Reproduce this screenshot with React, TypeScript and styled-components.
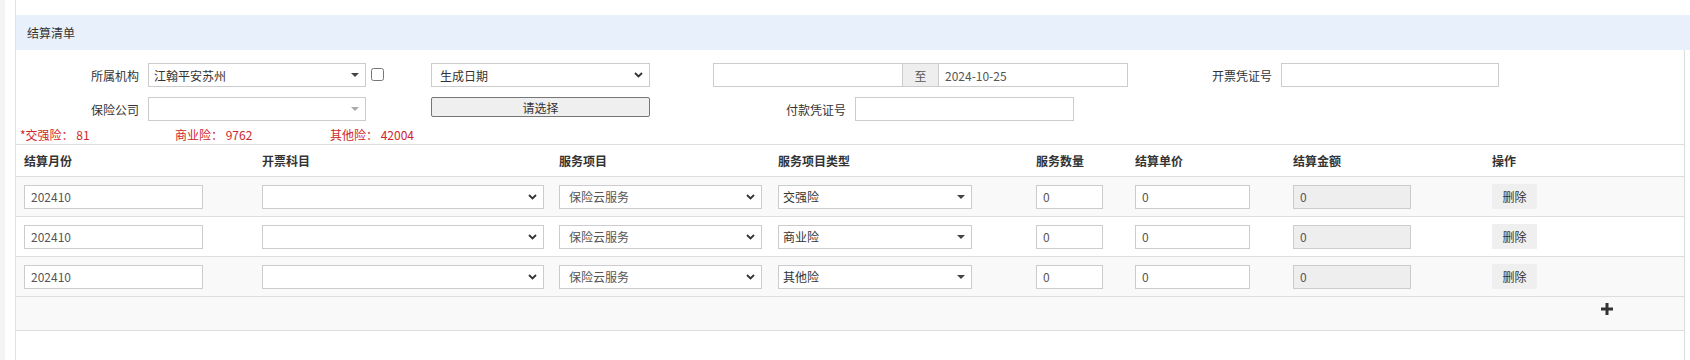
import React from 'react'
import styled, { createGlobalStyle } from 'styled-components'

const GlobalStyle = createGlobalStyle`
    body {
        margin: 0;
        background: #fff;
        font-family: "Noto Sans CJK SC", "Noto Sans", sans-serif;
        font-size: 12px;
        color: #333;
    }
    * { box-sizing: border-box; }
`

const Page = styled.div`
    display: flex;
    min-height: 360px;
`
const EdgeStrip = styled.div`
    width: 5px;
    margin-right: 10px;
    background: #f4f4f4;
`
const Panel = styled.div`
    flex: 1;
    display: flex;
    flex-direction: column;
    padding-top: 15px;
    border-left: 1px solid #e2e2e2;
`
const TitleBar = styled.div`
    height: 35px;
    display: flex;
    align-items: center;
    padding-left: 11px;
    background: #e8f1fb;
    color: #333;
`
const Body = styled.div`
    flex: 1;
    margin-right: 5px;
    padding-top: 13px;
    border-right: 1px solid #ddd;
`
const FormRow = styled.div<{ $top?: number }>`
    display: flex;
    align-items: center;
    height: 24px;
    margin-top: ${p => p.$top || 0}px;
`
const Label = styled.label<{ $w: number; $ml?: number }>`
    width: ${p => p.$w}px;
    margin-left: ${p => p.$ml || 0}px;
    margin-right: 9px;
    text-align: right;
    color: #333;
    white-space: nowrap;
`
const Field = styled.div<{ $w: number; $ml?: number; $pl?: number; $muted?: boolean }>`
    width: ${p => p.$w}px;
    height: 24px;
    margin-left: ${p => p.$ml || 0}px;
    padding: 0 6px 0 ${p => p.$pl ?? 5}px;
    display: flex;
    align-items: center;
    justify-content: space-between;
    border: 1px solid #ccc;
    background: #fff;
    color: ${p => (p.$muted ? '#555' : '#333')};
    white-space: nowrap;
`
const TextInput = styled.input<{ $w: number; $ml?: number; $disabled?: boolean }>`
    width: ${p => p.$w}px;
    height: 24px;
    margin: 0 0 0 ${p => p.$ml || 0}px;
    padding: 0 6px;
    border: 1px solid #ccc;
    border-radius: 0;
    outline: none;
    background: ${p => (p.$disabled ? '#eee' : '#fff')};
    font-family: "Noto Sans CJK SC", "Noto Sans", sans-serif;
    font-size: 12px;
    color: #555;
`
const CheckBox = styled.input`
    width: 13px;
    height: 13px;
    margin: 5px 0 0 5px;
    align-self: flex-start;
`
const DateRange = styled.div`
    display: flex;
    margin-left: 63px;
`
const Addon = styled.span`
    width: 35px;
    height: 24px;
    display: flex;
    align-items: center;
    justify-content: center;
    background: #eee;
    border-top: 1px solid #ccc;
    border-bottom: 1px solid #ccc;
    color: #555;
`
const PickButton = styled.button`
    width: 219px;
    height: 20px;
    margin-left: 65px;
    align-self: flex-start;
    padding: 0;
    border: 1px solid #767676;
    border-radius: 2px;
    background: #efefef;
    font-family: "Noto Sans CJK SC", "Noto Sans", sans-serif;
    font-size: 12px;
    color: #333;
`
const Summary = styled.div`
    display: flex;
    margin-top: 5px;
    padding-left: 4px;
    line-height: 18px;
    color: #d0262b;
`
const SummaryItem = styled.span`
    width: 155px;
    white-space: pre;
`
const Table = styled.div`
    border-top: 1px solid #ddd;
    border-bottom: 1px solid #ddd;
`
const cols = '238px 297px 219px 258px 99px 158px 199px 1fr'
const HeadRow = styled.div`
    display: grid;
    grid-template-columns: ${cols};
    height: 32px;
    align-items: center;
    border-bottom: 1px solid #ddd;
    background: #fff;
    font-weight: bold;
    color: #333;
`
const Row = styled.div<{ $striped: boolean }>`
    display: grid;
    grid-template-columns: ${cols};
    height: 40px;
    align-items: center;
    border-bottom: 1px solid #ddd;
    background: ${p => (p.$striped ? '#f9f9f9' : '#fff')};
`
const Cell = styled.div`
    padding-left: 8px;
    display: flex;
    align-items: center;
`
const DeleteButton = styled.button`
    width: 45px;
    height: 25px;
    padding: 0;
    border: none;
    background: #efefef;
    font-family: "Noto Sans CJK SC", "Noto Sans", sans-serif;
    font-size: 12px;
    color: #333;
`
const FooterRow = styled.div`
    height: 33px;
    display: flex;
    justify-content: flex-end;
    padding: 6px 71px 0 0;
    background: #f9f9f9;
`

const Caret = ({ color = '#444' }: { color?: string }) => (
    <svg width="8" height="4" viewBox="0 0 8 4">
        <polygon points="0,0 8,0 4,4" fill={color} />
    </svg>
)

const Chevron = () => (
    <svg width="9" height="6" viewBox="0 0 9 6">
        <polyline points="1,1 4.5,4.5 8,1" fill="none" stroke="#333" strokeWidth="1.8" />
    </svg>
)

const Plus = () => (
    <svg width="12" height="12" viewBox="0 0 12 12">
        <rect x="0" y="4.5" width="12" height="3" fill="#333" />
        <rect x="4.5" y="0" width="3" height="12" fill="#333" />
    </svg>
)

const rows = ['交强险', '商业险', '其他险']

const App: React.FunctionComponent = () => {
    return (
        <Page>
            <GlobalStyle />
            <EdgeStrip />
            <Panel>
                <TitleBar>结算清单</TitleBar>
                <Body>
                    <FormRow>
                        <Label $w={123}>所属机构</Label>
                        <Field $w={218}>
                            <span>江翰平安苏州</span>
                            <Caret />
                        </Field>
                        <CheckBox type="checkbox" />
                        <Field $w={219} $ml={47} $pl={8}>
                            <span>生成日期</span>
                            <Chevron />
                        </Field>
                        <DateRange>
                            <TextInput $w={190} />
                            <Addon>至</Addon>
                            <TextInput $w={190} defaultValue="2024-10-25" />
                        </DateRange>
                        <Label $w={100} $ml={44}>开票凭证号</Label>
                        <TextInput $w={218} />
                    </FormRow>
                    <FormRow $top={10}>
                        <Label $w={123}>保险公司</Label>
                        <Field $w={218}>
                            <span />
                            <Caret color="#aaa" />
                        </Field>
                        <PickButton>请选择</PickButton>
                        <Label $w={100} $ml={96}>付款凭证号</Label>
                        <TextInput $w={219} />
                    </FormRow>
                    <Summary>
                        <SummaryItem>*交强险： 81</SummaryItem>
                        <SummaryItem>商业险： 9762</SummaryItem>
                        <SummaryItem>其他险： 42004</SummaryItem>
                    </Summary>
                    <Table>
                        <HeadRow>
                            <Cell>结算月份</Cell>
                            <Cell>开票科目</Cell>
                            <Cell>服务项目</Cell>
                            <Cell>服务项目类型</Cell>
                            <Cell>服务数量</Cell>
                            <Cell>结算单价</Cell>
                            <Cell>结算金额</Cell>
                            <Cell>操作</Cell>
                        </HeadRow>
                        {rows.map((type, i) => (
                            <Row key={type} $striped={i % 2 === 0}>
                                <Cell><TextInput $w={179} defaultValue="202410" /></Cell>
                                <Cell>
                                    <Field $w={282}>
                                        <span />
                                        <Chevron />
                                    </Field>
                                </Cell>
                                <Cell>
                                    <Field $w={203} $pl={9} $muted>
                                        <span>保险云服务</span>
                                        <Chevron />
                                    </Field>
                                </Cell>
                                <Cell>
                                    <Field $w={194} $pl={4}>
                                        <span>{type}</span>
                                        <Caret />
                                    </Field>
                                </Cell>
                                <Cell><TextInput $w={67} defaultValue="0" /></Cell>
                                <Cell><TextInput $w={115} defaultValue="0" /></Cell>
                                <Cell><TextInput $w={118} defaultValue="0" $disabled readOnly /></Cell>
                                <Cell><DeleteButton>删除</DeleteButton></Cell>
                            </Row>
                        ))}
                        <FooterRow>
                            <Plus />
                        </FooterRow>
                    </Table>
                </Body>
            </Panel>
        </Page>
    )
}

export default App
